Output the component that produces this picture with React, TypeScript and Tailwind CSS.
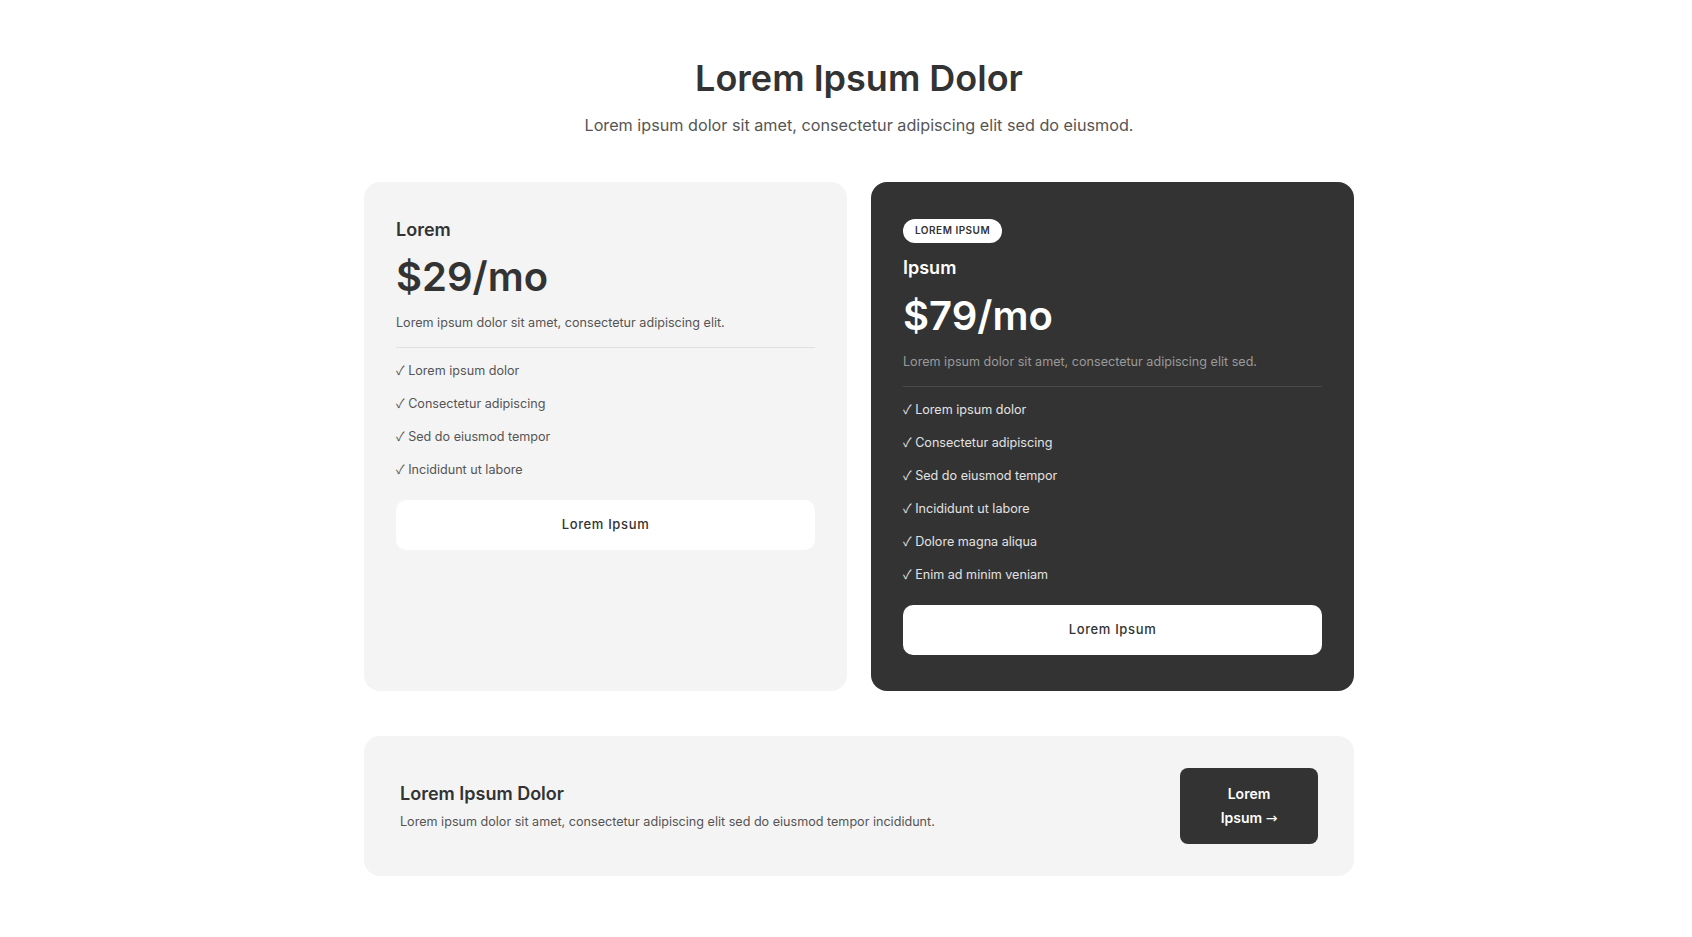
const basic = ["Lorem ipsum dolor", "Consectetur adipiscing", "Sed do eiusmod tempor", "Incididunt ut labore"];
const pro = [...basic, "Dolore magna aliqua", "Enim ad minim veniam"];

function Features({ items, dark }: { items: string[]; dark?: boolean }) {
  return (
    <ul className={`mt-3 space-y-3 text-[12.6px] leading-[21px] ${dark ? "text-[#e2e2e2]" : "text-[#555]"}`}>
      {items.map((item) => (
        <li key={item} className="h-[21px]">
          <span className="font-['Noto_Sans_CJK_SC',sans-serif] leading-none">✓</span> {item}
        </li>
      ))}
    </ul>
  );
}

export default function App() {
  return (
    <div className="min-h-screen bg-white pl-[26px] font-['Inter',sans-serif] text-[#333]">
      <div className="mx-auto max-w-[990px] pt-[57px] pb-16">
        <div className="text-center">
          <h1 className="text-4xl leading-[1.2] font-semibold">Lorem Ipsum Dolor</h1>
          <p className="mt-[13px] text-[16.2px] leading-6 text-[#555]">
            Lorem ipsum dolor sit amet, consectetur adipiscing elit sed do eiusmod.
          </p>
        </div>

        <div className="mt-[45px] grid grid-cols-2 gap-6">
          <div className="rounded-2xl bg-[#f4f4f4] px-8 pt-[34px] pb-9">
            <h3 className="text-lg leading-7 font-semibold">Lorem</h3>
            <div className="mt-[11px] text-[40px] leading-[1.1] font-semibold">$29/mo</div>
            <p className="mt-3.5 text-[12.6px] leading-5 text-[#555]">
              Lorem ipsum dolor sit amet, consectetur adipiscing elit.
            </p>
            <div className="mt-3.5 h-px bg-[#e0e0e0]" />
            <Features items={basic} />
            <button className="mt-5 h-[50px] w-full rounded-[10px] bg-white text-[13px] font-medium tracking-[0.05em] text-[#333]">
              Lorem Ipsum
            </button>
          </div>

          <div className="rounded-2xl bg-[#333] px-8 pt-[34px] pb-9 text-white">
            <span className="mt-0.5 inline-flex h-6 items-center rounded-full bg-white px-3 text-[10px] font-semibold tracking-wider text-[#333]">
              LOREM IPSUM
            </span>
            <h3 className="mt-[11px] text-lg leading-7 font-semibold">Ipsum</h3>
            <div className="mt-3 text-[40px] leading-[1.1] font-semibold">$79/mo</div>
            <p className="mt-3.5 text-[12.6px] leading-5 text-[#9a9a9a]">
              Lorem ipsum dolor sit amet, consectetur adipiscing elit sed.
            </p>
            <div className="mt-3.5 h-px bg-[#4a4a4a]" />
            <Features items={pro} dark />
            <button className="mt-5 h-[50px] w-full rounded-[10px] bg-white text-[13px] font-medium tracking-[0.05em] text-[#333]">
              Lorem Ipsum
            </button>
          </div>
        </div>

        <div className="mt-[45px] flex items-center justify-between rounded-2xl bg-[#f4f4f4] px-9 py-8">
          <div>
            <h3 className="text-lg leading-7 font-semibold">Lorem Ipsum Dolor</h3>
            <p className="mt-1 text-[12.6px] leading-5 text-[#555]">
              Lorem ipsum dolor sit amet, consectetur adipiscing elit sed do eiusmod tempor incididunt.
            </p>
          </div>
          <button className="w-[138px] rounded-lg bg-[#333] py-3.5 text-sm leading-6 font-semibold text-white">
            Lorem
            <br />
            Ipsum <span className="font-['DejaVu_Sans',sans-serif] font-normal">→</span>
          </button>
        </div>
      </div>
    </div>
  );
}
